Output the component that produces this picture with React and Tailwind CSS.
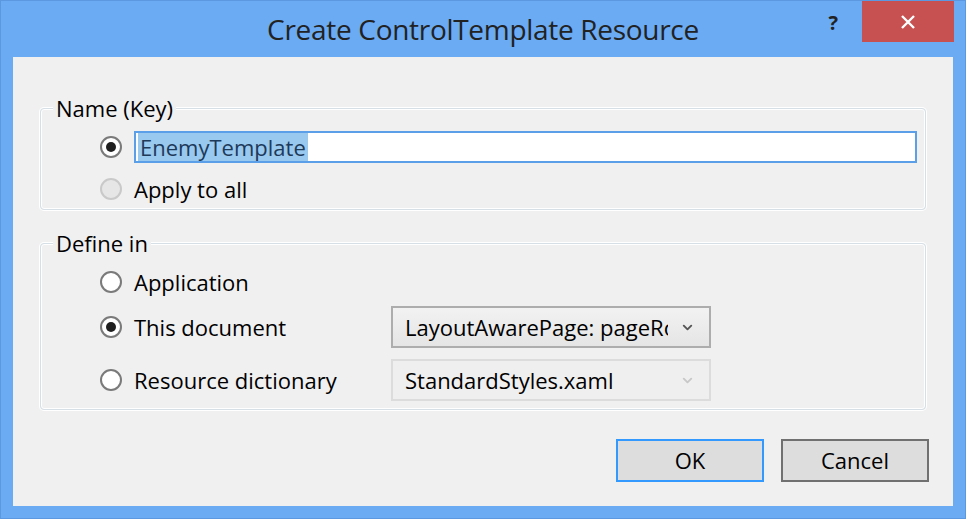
import { ChevronDown } from 'lucide-react';

function Radio({ checked, disabled }) {
  return (
    <span
      className={`flex h-[22px] w-[22px] shrink-0 items-center justify-center rounded-full border-2 ${
        disabled ? 'border-[#c9c9c9] bg-[#e6e6e6]' : 'border-[#7a7a7a] bg-white'
      }`}
    >
      {checked && <span className="h-[10px] w-[10px] rounded-full bg-[#1f1f1f]" />}
    </span>
  );
}

function Group({ label, children, className }) {
  return (
    <fieldset
      className={`rounded-[4px] border border-[#d5dfe5] shadow-[0_0_0_1px_#ffffff,inset_0_0_0_1px_#ffffff] ${className}`}
    >
      <legend className="ml-[12px] bg-[#f0f0f0] px-[3px] text-[22px] leading-[28px] text-black">
        {label}
      </legend>
      {children}
    </fieldset>
  );
}

function Combo({ value, disabled }) {
  return (
    <div
      className={`flex h-[42px] w-[320px] items-center border-2 pl-[12px] pr-[14px] text-[22px] ${
        disabled
          ? 'border-[#dcdcdc] bg-[#efefef] text-black'
          : 'border-[#adadad] bg-gradient-to-b from-[#f2f2f2] to-[#e5e5e5] text-black'
      }`}
    >
      <span className="flex-1 overflow-hidden whitespace-nowrap">{value}</span>
      <ChevronDown
        size={15}
        strokeWidth={3}
        className={`ml-[12px] shrink-0 ${disabled ? 'text-[#c8c8c8]' : 'text-[#555555]'}`}
      />
    </div>
  );
}

export default function App() {
  return (
    <div
      className="flex h-[519px] w-[966px] flex-col border border-[#5b98df] bg-[#6aabf4] text-black"
      style={{ fontFamily: '"Open Sans", "Noto Sans", sans-serif' }}
    >
      {/* title bar */}
      <div className="relative flex h-[56px] shrink-0 items-start">
        <div className="flex h-[56px] flex-1 items-center justify-center pb-[1px] text-[28px] tracking-[-0.3px] text-[#222222]">
          Create ControlTemplate Resource
        </div>
        <div className="absolute right-[11px] top-0 flex items-start">
          <span className="mr-[24px] mt-[7px] text-[20px] font-bold text-[#222222]">?</span>
          <button className="flex h-[41px] w-[92px] items-center justify-center bg-[#c75050] text-white">
            <svg width="16" height="16" viewBox="0 0 16 16">
              <path d="M2 2 L14 14 M14 2 L2 14" stroke="white" strokeWidth="2.4" />
            </svg>
          </button>
        </div>
      </div>

      {/* client area */}
      <div className="mb-[12px] ml-[12px] mr-[12px] flex flex-1 flex-col bg-[#f0f0f0] pl-[27px] pr-[27px] pt-[37px]">
        <Group label="Name (Key)" className="pb-[4px]">
          <div className="flex flex-col gap-[10px] pl-[59px] pr-[8px] pt-[9px]">
            <div className="flex h-[32px] items-center gap-[12px]">
              <Radio checked />
              <div className="flex h-[32px] flex-1 items-center border-2 border-[#5b9fe8] bg-white pl-[2px]">
                <span className="bg-[#99c9ef] px-[2px] text-[22px] leading-[28px] text-[#1d3a5a]">
                  EnemyTemplate
                </span>
              </div>
            </div>
            <div className="flex h-[32px] items-center gap-[12px] text-[22px]">
              <Radio disabled />
              <span>Apply to all</span>
            </div>
          </div>
        </Group>

        <Group label="Define in" className="mt-[19px] pb-[8px]">
          <div className="flex flex-col pl-[59px] pt-[9px] text-[22px]">
            <div className="flex h-[32px] items-center gap-[12px]">
              <Radio />
              <span>Application</span>
            </div>
            <div className="mt-[8px] flex h-[42px] items-center">
              <div className="flex w-[291px] items-center gap-[12px]">
                <Radio checked />
                <span>This document</span>
              </div>
              <Combo value="LayoutAwarePage: pageRoot" />
            </div>
            <div className="mt-[11px] flex h-[42px] items-center">
              <div className="flex w-[291px] items-center gap-[12px]">
                <Radio />
                <span>Resource dictionary</span>
              </div>
              <Combo value="StandardStyles.xaml" disabled />
            </div>
          </div>
        </Group>

        <div className="mt-[29px] flex justify-end gap-[17px] text-[22px]">
          <button className="h-[43px] w-[148px] border-2 border-[#3399ff] bg-[#dddddd]">OK</button>
          <button className="mr-[-3px] h-[43px] w-[148px] border-2 border-[#707070] bg-[#dddddd]">Cancel</button>
        </div>
      </div>
    </div>
  );
}
